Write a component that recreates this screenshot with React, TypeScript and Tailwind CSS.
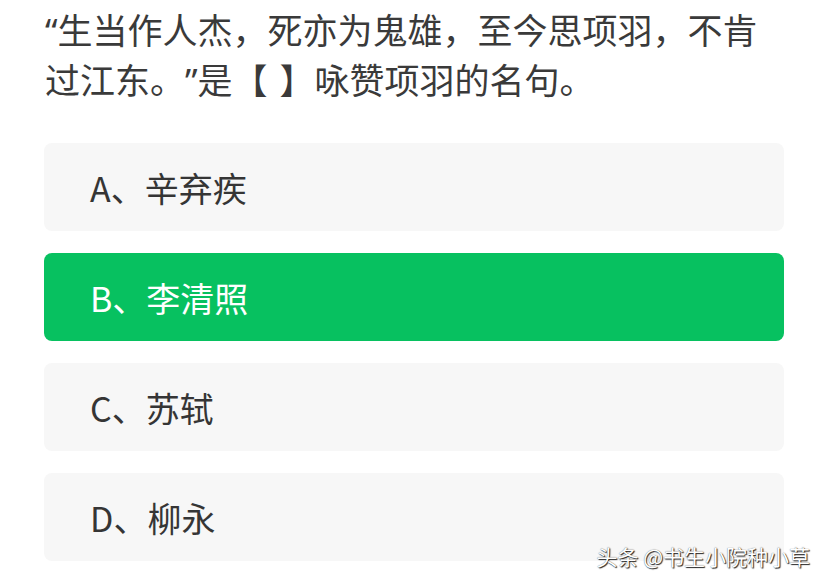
import React from 'react';

const options = [
  { key: 'A', text: '辛弃疾', selected: false },
  { key: 'B', text: '李清照', selected: true },
  { key: 'C', text: '苏轼', selected: false },
  { key: 'D', text: '柳永', selected: false },
];

const font = { fontFamily: '"Noto Sans CJK SC", "Noto Sans", sans-serif' };

// latin-width quote marks, as in the screenshot
const Q = ({ c }: { c: string }) => (
  <span style={{ fontFamily: '"Noto Sans", sans-serif' }}>{c}</span>
);

export default function App() {
  return (
    <div className="relative w-[828px] h-[585px] bg-white overflow-hidden" style={font}>
      <div className="h-[101px] pl-[45px] pr-[40px] pt-[5px] text-[35px] leading-[48px] text-[#3a3a3a] whitespace-nowrap [text-spacing-trim:space-all]">
        <Q c="“" />生当作人杰，死亦为鬼雄，至今思项羽，不肯
        <br />
        过江东。<Q c="”" />是【<span className="inline-block w-[12px]" />】咏赞项羽的名句。
      </div>

      <div className="mt-[42px] ml-[44px] w-[740px] flex flex-col gap-[22px]">
        {options.map((o) => (
          <div
            key={o.key}
            className={`h-[88px] rounded-[8px] flex items-center pl-[46px] text-[34px] ${
              o.selected ? 'bg-[#07c160] text-white' : 'bg-[#f7f7f7] text-[#353535]'
            }`}
          >
            {o.key}、{o.text}
          </div>
        ))}
      </div>

      {/* watermark */}
      <div className="absolute right-[18px] top-[543px] text-[21px] leading-[26px] text-white [text-shadow:1px_1px_1px_#222,0_0_1px_#555]">
        头条 @书生小院种小草
      </div>
    </div>
  );
}
